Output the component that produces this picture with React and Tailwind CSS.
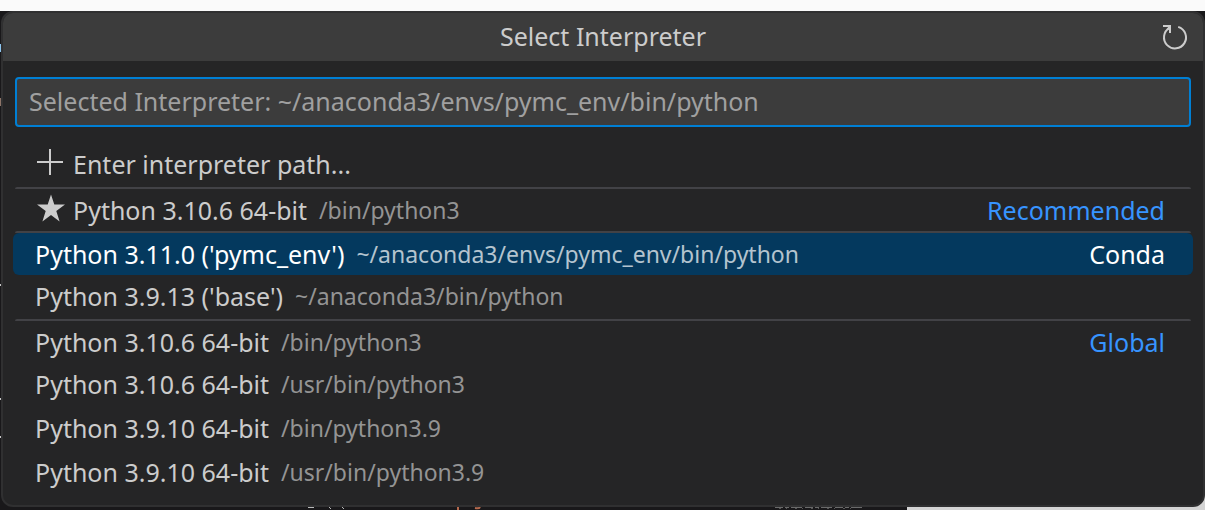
const groups = [
  {
    id: 'path',
    items: [{ icon: 'plus', label: 'Enter interpreter path...' }],
  },
  {
    id: 'recommended',
    items: [{ icon: 'star', label: 'Python 3.10.6 64-bit', path: '/bin/python3', tag: 'Recommended' }],
  },
  {
    id: 'conda',
    items: [
      { label: "Python 3.11.0 ('pymc_env')", path: '~/anaconda3/envs/pymc_env/bin/python', tag: 'Conda', selected: true },
      { label: "Python 3.9.13 ('base')", path: '~/anaconda3/bin/python' },
    ],
  },
  {
    id: 'global',
    items: [
      { label: 'Python 3.10.6 64-bit', path: '/bin/python3', tag: 'Global' },
      { label: 'Python 3.10.6 64-bit', path: '/usr/bin/python3' },
      { label: 'Python 3.9.10 64-bit', path: '/bin/python3.9' },
      { label: 'Python 3.9.10 64-bit', path: '/usr/bin/python3.9' },
    ],
  },
];

function PlusIcon() {
  return (
    <svg viewBox="0 0 32 32" className="-mt-1 size-8 shrink-0" fill="none" stroke="currentColor" strokeWidth="2" aria-hidden="true">
      <path d="M17 3v26M4 16h26" />
    </svg>
  );
}

function StarIcon() {
  return (
    <svg viewBox="0 0 32 32" className="-mt-1 size-8 shrink-0" fill="currentColor" aria-hidden="true">
      <path d="M18 2.5l3.300 10H32l-8.700 6.400 3.300 10.600-8.600-6.400-8.600 6.400 3.300-10.600L4 12.500h10.700z" />
    </svg>
  );
}

function RefreshIcon() {
  return (
    <svg viewBox="0 0 32 32" className="size-8" fill="none" stroke="currentColor" strokeWidth="2" aria-hidden="true">
      <path d="M19.200 5.900A11 11 0 1 1 10.500 6.900" />
      <path d="M4 5h7v7" />
      <path d="M11 5.500L8.500 8.500" />
    </svg>
  );
}

function Row({ item, divided }) {
  const tone = item.selected ? 'bg-[#04395e] text-white' : 'text-[#cccccc]';
  const spacing = item.selected ? 'h-[42px]' : divided ? 'h-11 pt-0.5' : 'h-11 pb-0.5';
  return (
    <li className={`relative h-11 rounded-md ${item.selected ? 'pt-0.5' : ''}`}>
      {divided && <span className="absolute inset-x-0.5 top-0 h-0.5 rounded-t-sm bg-[#424246]" />}
      <button
        type="button"
        aria-pressed={Boolean(item.selected)}
        className={`flex w-full items-center rounded-md pr-7 text-left ${tone} ${spacing} ${item.icon ? 'pl-5' : 'pl-[22px]'}`}
      >
        {item.icon === 'plus' && <PlusIcon />}
        {item.icon === 'star' && <StarIcon />}
        <span className={`whitespace-nowrap text-[25px] leading-8 ${item.icon ? 'ml-2' : ''}`}>{item.label}</span>
        {item.path && (
          <span className={`ml-3 whitespace-nowrap text-[23px] leading-8 ${item.selected ? 'text-[#b4c4cf]' : 'text-[#949494]'}`}>
            {item.path}
          </span>
        )}
        {item.tag && (
          <span className={`ml-auto text-[25px] leading-8 ${item.selected ? '' : 'text-[#3794ff]'}`}>{item.tag}</span>
        )}
      </button>
    </li>
  );
}

function EditorEdge() {
  return (
    <svg className="absolute bottom-0 left-0 h-[3px] w-[880px]" viewBox="0 0 880 3" aria-hidden="true">
      <path d="M308 .5h6M329 0l2 2M342 0l2 2" stroke="#b9b9b9" />
      <path d="M458 0v3M475 1q4 1 5-1" stroke="#b5694d" strokeWidth="2" fill="none" />
      <path d="M775 .5h90" stroke="#6a6a6a" strokeDasharray="8 2 4 2 11 3" />
      <path d="M779 1.500h80" stroke="#555" strokeDasharray="2 5 1 8" />
    </svg>
  );
}

export default function App() {
  return (
    <div className="bg-[#fafafa] pt-[11px] font-['Noto_Sans','Open_Sans',sans-serif]">
      <div className="relative bg-[#19181a] pb-[3px] pl-px">
        <div className="absolute right-0 bottom-0 h-5 w-[298px] bg-[#d4d4d4]" />
        <EditorEdge />
        <span className="absolute top-[33px] left-0 h-2 w-px bg-[#8cc4ee]" />
        <span className="absolute top-[87px] left-0 h-2 w-px bg-[#8d7468]" />
        <span className="absolute top-[273px] left-0 h-0.5 w-px bg-[#c8c8c8]" />
        <span className="absolute top-[387px] left-0 h-0.5 w-px bg-[#c8c8c8]" />
        <span className="absolute top-[425px] left-0 h-0.5 w-px bg-[#c8c8c8]" />

        <section
          role="dialog"
          aria-labelledby="picker-title"
          className="relative overflow-hidden rounded-xl border-2 border-[#303031] bg-[#252526] pb-2.5"
        >
          <header className="grid h-12 grid-cols-[1fr_auto_1fr] items-center bg-[#3c3c3c] px-3 text-[#cccccc]">
            <h1 id="picker-title" className="col-start-2 pb-0.5 text-[25px] leading-8">
              Select Interpreter
            </h1>
            <button type="button" aria-label="Refresh interpreter list" className="justify-self-end">
              <RefreshIcon />
            </button>
          </header>

          <div className="px-3 pt-4">
            <input
              type="text"
              aria-label="Interpreter"
              placeholder="Selected Interpreter: ~/anaconda3/envs/pymc_env/bin/python"
              className="block h-[50px] w-full rounded-sm border-2 border-[#007fd4] bg-[#3c3c3c] px-3 pb-0.5 text-[25px] text-[#cccccc] outline-none placeholder:text-[#a0a0a0]"
            />
          </div>

          <div className="px-2.5 pt-4">
            {groups.map((group, g) => (
              <ul key={group.id}>
                {group.items.map((item, i) => (
                  <Row key={item.label + item.path} item={item} divided={g > 0 && i === 0} />
                ))}
              </ul>
            ))}
          </div>
        </section>
      </div>
    </div>
  );
}
